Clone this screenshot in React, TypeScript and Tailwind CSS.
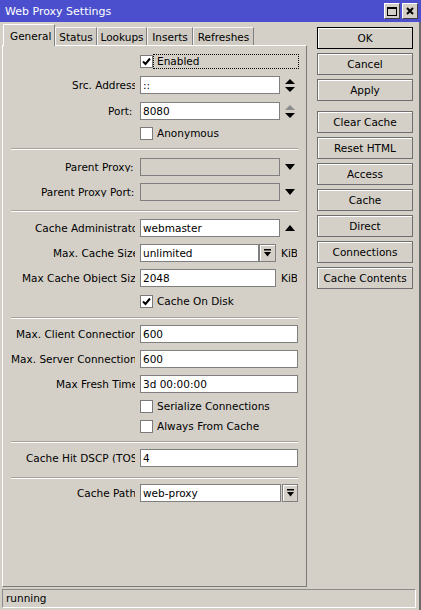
import React from "react";

// small glyphs drawn inline
function Check() {
  return (
    <svg width="9" height="9" viewBox="0 0 9 9" className="block">
      <path d="M1 4.5 L3.5 7 L8 1.5" fill="none" stroke="#000" strokeWidth="2" />
    </svg>
  );
}

function Spin({ upGray = false }: { upGray?: boolean }) {
  return (
    <svg width="10" height="13" viewBox="0 0 10 13" className="block">
      <path d="M0 5 L5 0 L10 5 Z" fill={upGray ? "#8c8c8c" : "#000"} />
      <path d="M0 8 L5 13 L10 8 Z" fill="#000" />
    </svg>
  );
}

function Tri({ up = false }: { up?: boolean }) {
  return (
    <svg width="10" height="6" viewBox="0 0 10 6" className="block">
      {up ? <path d="M0 6 L5 0 L10 6 Z" fill="#000" /> : <path d="M0 0 L5 6 L10 0 Z" fill="#000" />}
    </svg>
  );
}

function DropGlyph() {
  return (
    <svg width="7" height="8" viewBox="0 0 7 8" className="block">
      <rect x="0" y="0" width="7" height="1.5" fill="#000" />
      <path d="M0 3 L7 3 L3.5 7.5 Z" fill="#000" />
    </svg>
  );
}

function Checkbox({ checked = false }: { checked?: boolean }) {
  return (
    <div className="w-[13px] h-[13px] shrink-0 bg-white border border-[#7a7a7a] flex items-center justify-center">
      {checked && <Check />}
    </div>
  );
}

type RowProps = {
  label: string;
  pad: string; // left padding so the label starts where the picture has it
  className?: string;
  children: React.ReactNode;
};

function Row({ label, pad, className = "", children }: RowProps) {
  return (
    <div className={`flex items-center h-[18px] ${className}`}>
      <div className={`w-[132px] shrink-0 overflow-hidden whitespace-nowrap ${pad}`}>{label}</div>
      <div className="ml-[5px] flex items-center">{children}</div>
    </div>
  );
}

function Field({ value = "", w, disabled = false }: { value?: string; w: string; disabled?: boolean }) {
  return (
    <div
      className={`${w} h-[18px] border border-[#7f7f7f] px-[2px] flex items-center whitespace-nowrap overflow-hidden ${
        disabled ? "bg-[#d4d0c8]" : "bg-white"
      }`}
    >
      {value}
    </div>
  );
}

function Sep({ className = "" }: { className?: string }) {
  return <div className={`ml-[8px] w-[287px] h-[2px] border-t border-[#a7a39b] border-b border-b-white ${className}`} />;
}

function CheckRow({ label, checked = false, className = "" }: { label: string; checked?: boolean; className?: string }) {
  return (
    <div className={`flex items-center h-[13px] pl-[137px] ${className}`}>
      <Checkbox checked={checked} />
      <span className="ml-[4px] whitespace-nowrap">{label}</span>
    </div>
  );
}

const buttons = ["OK", "Cancel", "Apply", "Clear Cache", "Reset HTML", "Access", "Cache", "Direct", "Connections", "Cache Contents"];

export default function App() {
  return (
    <div className="w-[421px] h-[610px] flex flex-col bg-[#d4d0c8] text-black text-[10.5px] leading-none font-[family-name:'DejaVu_Sans','Liberation_Sans',sans-serif]">
      {/* Title bar */}
      <div className="h-[22px] shrink-0 bg-[#4b4fcd] flex items-center pl-[5px] pr-[3px]">
        <span className="text-white text-[11px]">Web Proxy Settings</span>
        <div className="flex-1" />
        <div className="w-[16px] h-[16px] bg-[#d4d0c8] border border-t-white border-l-white border-r-[#404040] border-b-[#404040] flex items-center justify-center">
          <div className="w-[10px] h-[9px] border border-black border-t-2" />
        </div>
        <div className="ml-[2px] w-[16px] h-[16px] bg-[#d4d0c8] border border-t-white border-l-white border-r-[#404040] border-b-[#404040] flex items-center justify-center">
          <svg width="8" height="8" viewBox="0 0 8 8" className="block">
            <path d="M1 1 L7 7 M7 1 L1 7" stroke="#000" strokeWidth="2" />
          </svg>
        </div>
      </div>

      <div className="flex-1 flex flex-col pl-[2px] border-r-2 border-[#6a6a6a]">
        <div className="flex h-[565px]">
          {/* Tabs + panel */}
          <div className="w-[305px] flex flex-col pt-[2px]">
            <div className="flex h-[22px] pl-[1px] items-end">
              <div className="w-[52px] h-[22px] relative z-10 bg-[#d4d0c8] border-l border-t border-white border-r border-r-[#808080] pl-[6px] pt-[6px]">
                General
              </div>
              <div className="w-[42px] h-[19px] bg-[#cfcbc3] border-l border-t border-[#f4f4f4] border-r border-r-[#808080] flex items-center justify-center">
                Status
              </div>
              <div className="w-[50px] h-[19px] bg-[#cfcbc3] border-l border-t border-[#f4f4f4] border-r border-r-[#808080] flex items-center justify-center">
                Lookups
              </div>
              <div className="w-[46px] h-[19px] bg-[#cfcbc3] border-l border-t border-[#f4f4f4] border-r border-r-[#808080] flex items-center justify-center">
                Inserts
              </div>
              <div className="w-[61px] h-[19px] bg-[#cfcbc3] border-l border-t border-[#f4f4f4] border-r border-r-[#808080] flex items-center justify-center">
                Refreshes
              </div>
            </div>

            <div className="-mt-px h-[542px] border-l border-t border-white border-r border-b border-r-[#7a7a7a] border-b-[#7a7a7a] flex flex-col">
              <div className="mt-[8px] flex items-center h-[15px] pl-[137px]">
                <Checkbox checked />
                <div className="h-[15px] w-[146px] border border-dotted border-black pl-[3px] flex items-center">Enabled</div>
              </div>

              <Row label="Src. Address:" pad="pl-[69px]" className="mt-[7px]">
                <Field value="::" w="w-[140px]" />
                <div className="ml-[5px]"><Spin /></div>
              </Row>
              <Row label="Port:" pad="pl-[105px]" className="mt-[8px]">
                <Field value="8080" w="w-[140px]" />
                <div className="ml-[5px]"><Spin upGray /></div>
              </Row>
              <CheckRow label="Anonymous" className="mt-[7px]" />

              <Sep className="mt-[8px]" />

              <Row label="Parent Proxy:" pad="pl-[62px]" className="mt-[8px]">
                <Field w="w-[140px]" disabled />
                <div className="ml-[5px]"><Tri /></div>
              </Row>
              <Row label="Parent Proxy Port:" pad="pl-[38px]" className="mt-[7px]">
                <Field w="w-[140px]" disabled />
                <div className="ml-[5px]"><Tri /></div>
              </Row>

              <Sep className="mt-[9px]" />

              <Row label="Cache Administrator:" pad="pl-[32px]" className="mt-[7px]">
                <Field value="webmaster" w="w-[140px]" />
                <div className="ml-[5px]"><Tri up /></div>
              </Row>
              <Row label="Max. Cache Size:" pad="pl-[50px]" className="mt-[7px]">
                <Field value="unlimited" w="w-[119px]" />
                <div className="w-[17px] h-[18px] bg-[#d4d0c8] border border-[#7f7f7f] shadow-[inset_1px_1px_0_#fff] flex items-center justify-center">
                  <DropGlyph />
                </div>
                <div className="ml-[5px] w-[16px] overflow-hidden whitespace-nowrap">KiB</div>
              </Row>
              <Row label="Max Cache Object Size:" pad="pl-[19px]" className="mt-[7px]">
                <Field value="2048" w="w-[136px]" />
                <div className="ml-[5px] w-[16px] overflow-hidden whitespace-nowrap">KiB</div>
              </Row>
              <CheckRow label="Cache On Disk" checked className="mt-[8px]" />

              <Sep className="mt-[9px]" />

              <Row label="Max. Client Connections:" pad="pl-[13px]" className="mt-[6px]">
                <Field value="600" w="w-[158px]" />
              </Row>
              <Row label="Max. Server Connections:" pad="pl-[8px]" className="mt-[7px]">
                <Field value="600" w="w-[158px]" />
              </Row>
              <Row label="Max Fresh Time:" pad="pl-[53px]" className="mt-[7px]">
                <Field value="3d 00:00:00" w="w-[158px]" />
              </Row>
              <CheckRow label="Serialize Connections" className="mt-[7px]" />
              <CheckRow label="Always From Cache" className="mt-[7px]" />

              <Sep className="mt-[8px]" />

              <Row label="Cache Hit DSCP (TOS):" pad="pl-[23px]" className="mt-[6px]">
                <Field value="4" w="w-[158px]" />
              </Row>

              <Sep className="mt-[10px]" />

              <Row label="Cache Path:" pad="pl-[74px]" className="mt-[5px]">
                <Field value="web-proxy" w="w-[141px]" />
                <div className="ml-[1px] w-[16px] h-[18px] bg-[#d4d0c8] border border-[#7f7f7f] shadow-[inset_1px_1px_0_#fff] flex items-center justify-center">
                  <DropGlyph />
                </div>
              </Row>
            </div>
          </div>

          {/* Buttons */}
          <div className="ml-[10px] pt-[5px] w-[96px] flex flex-col gap-[4px]">
            {buttons.map((b, i) => (
              <div
                key={b}
                className={`h-[22px] flex items-center justify-center whitespace-nowrap shadow-[inset_1px_1px_0_#fff] border ${
                  i === 0 ? "border-black" : "border-[#6e6e6e]"
                } ${i === 3 ? "mt-[6px]" : ""}`}
              >
                {b}
              </div>
            ))}
          </div>
        </div>

        {/* Status bar */}
        <div className="mt-[2px] w-[414px] h-[19px] border border-t-[#8a8a8a] border-l-[#8a8a8a] border-r-white border-b-white pl-[3px] flex items-center">
          running
        </div>
      </div>
    </div>
  );
}
